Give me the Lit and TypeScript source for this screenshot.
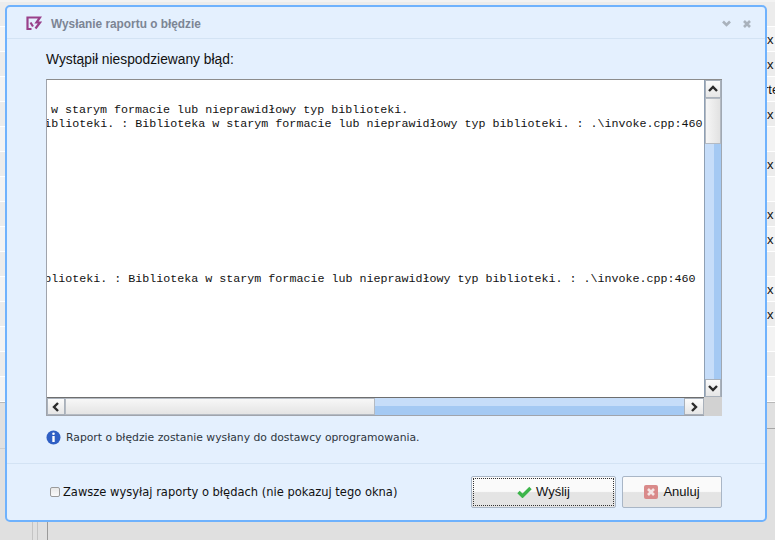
import { LitElement, html, css } from "lit";
import { customElement } from "lit/decorators.js";

const LINE_A = "Biblioteka w starym formacie lub nieprawidłowy typ biblioteki.";
const LINE_B = "Biblioteka w starym formacie lub nieprawidłowy typ biblioteki. : Biblioteka w starym formacie lub nieprawidłowy typ biblioteki. : .\\invoke.cpp:460";

const chevron = (d: string) => html`<svg width="12" height="10" viewBox="0 0 12 10"><path d=${d} fill="none" stroke="#2b2b2b" stroke-width="2.4"/></svg>`;

@customElement("app-root")
export class AppRoot extends LitElement {
  static styles = css`
    :host { display: block; width: 775px; height: 540px; position: relative; overflow: hidden; background: #e0e0e0; font-family: "DejaVu Sans", sans-serif; }
    .bg { display: flex; flex-direction: column; height: 540px; }
    .bg-rows { display: flex; flex-direction: column; padding-top: 2px; height: 402px; box-sizing: border-box; background: #f3f3f3; overflow: hidden; flex: none; }
    .bg-row { height: 25px; flex: none; box-sizing: border-box; border-bottom: 1px solid #fff; display: flex; align-items: center; padding-left: 767px; font: 13px "Liberation Sans", sans-serif; color: #111; white-space: nowrap; overflow: hidden; }
    .bg-row:nth-child(odd) { background: #ececec; }
    .rte { margin-left: -3px; }
    .bg-bands { flex: none; height: 52px; display: flex; border-top: 1px solid #b8b8b8; box-sizing: content-box; }
    .band-left { flex: 1; height: 45px; border-bottom: 1px solid #cdcdcd; }
    .band-right { flex: 1; height: 25px; border-bottom: 1px solid #a6a6a6; }
    .bg-low { flex: 1; display: flex; padding-left: 32px; }
    .bg-col { width: 4px; border-left: 1px solid #c4c4c4; border-right: 1px solid #c4c4c4; }
    .bg-col2 { width: 9px; border-right: 1px solid #9a9a9a; }

    .dialog { position: absolute; left: 5px; top: 5px; width: 762px; height: 517px; box-sizing: border-box; border: 2px solid #6fb2fd; border-radius: 5px; background: #e4f0fe; display: flex; flex-direction: column; }
    .head { height: 32px; flex: none; box-sizing: border-box; border-bottom: 1px solid #d3e3f4; display: flex; align-items: center; padding: 2px 14px 0 19px; gap: 9px; }
    .title { font: 700 11.85px "Liberation Sans", sans-serif; color: #7c8594; flex: 1; }
    .tools { display: flex; gap: 12px; align-items: center; }
    .body { flex: 1; padding: 11px 43px 0 39px; display: flex; flex-direction: column; }
    .lead { font: 13.8px "Liberation Sans", sans-serif; color: #111; line-height: 18px; height: 28px; padding-top: 1px; flex: none; }
    .frame { width: 676px; height: 337px; flex: none; box-sizing: border-box; border-top: 1px solid #8c8c8c; border-left: 1px solid #a0a4ac; background: #fff; display: grid; grid-template-columns: 657px 18px; grid-template-rows: 317px 19px; }
    .text { overflow: hidden; padding-top: 23px; box-sizing: border-box; font: 11.68px/14px "Liberation Mono", monospace; color: #111; white-space: pre; }
    .ln { height: 14px; }
    .l1 { margin-left: -73px; }
    .l2 { margin-left: -367px; }
    .l3 { margin-left: -374px; margin-top: 141px; }
    .vbar { display: flex; flex-direction: column; background: linear-gradient(90deg, #c6ddf9 0 55%, #a4c9f3 55%); border-left: 1px solid #8fa0b4; border-right: 1px solid #a0a8b2; box-sizing: border-box; }
    .vbar .btn { width: 16px; }
    .hbar { display: flex; background: linear-gradient(180deg, #c6ddf9 0 45%, #a4c9f3 45%); border-top: 1px solid #6e6e6e; border-bottom: 1px solid #a0a4ac; box-sizing: border-box; }
    .btn { flex: none; width: 18px; height: 18px; box-sizing: border-box; display: flex; align-items: center; justify-content: center; background: linear-gradient(#fbfbfb, #e6e6e6); border: 1px solid #a9b1bb; }
    .hbar .btn { height: 17px; }
    .hbar .btn.end { width: 20px; }
    .vthumb { height: 46px; flex: none; background: linear-gradient(90deg, #f6f6f6, #e2e2e2); border: 1px solid #b4bac2; box-sizing: border-box; }
    .hthumb { width: 310px; flex: none; background: linear-gradient(#f7f7f7, #e4e4e4); border: 1px solid #b4bac2; box-sizing: border-box; }
    .grow { flex: 1; }
    .corner { background: #d2d2d2; }
    .note { display: flex; align-items: center; gap: 5px; margin-top: 13px; font: 10.8px "DejaVu Sans", sans-serif; color: #2e3640; height: 16px; flex: none; }
    .foot { height: 57px; flex: none; box-sizing: border-box; border-top: 1px solid #d3e3f4; display: flex; align-items: center; padding: 0 43px 1px 43px; }
    .check { width: 10px; height: 10px; box-sizing: border-box; border: 1px solid #9a9a9a; border-radius: 2px; background: linear-gradient(#e8e8e8, #fafafa); margin-right: 3px; }
    .check-label { font: 11.49px "DejaVu Sans", sans-serif; color: #111; flex: 1; }
    .action { height: 32px; box-sizing: border-box; border: 1px solid #a9b6c6; border-radius: 2px; background: linear-gradient(#fafafa 0 48%, #e4e4e4 52%); display: flex; align-items: center; justify-content: center; font: 13px "Liberation Sans", sans-serif; color: #111; }
    .send { width: 145px; margin-right: 6px; gap: 4px; position: relative; }
    .send::after { content: ""; position: absolute; inset: 1px; border: 1px dotted #333; }
    .cancel { width: 100px; gap: 5px; }
  `;

  render() {
    const rows = ["", "x", "x", "rte", "x", "", "x", "", "x", "x", "", "x", "x", "", "", ""];
    return html`
      <div class="bg">
        <div class="bg-rows">
          ${rows.map(r => html`<div class="bg-row">${r === "rte" ? html`<span class="rte">rte</span>` : r}</div>`)}
        </div>
        <div class="bg-bands"><div class="band-left"></div><div class="band-right"></div></div>
        <div class="bg-low"><div class="bg-col"></div><div class="bg-col2"></div></div>
      </div>
      <div class="dialog">
        <div class="head">
          <svg width="16" height="15" viewBox="0 0 16 15"><path d="M5.5 13H1.5V1.5H14L10.5 6.5H14L9.5 12.5M4.5 6.5L7 10.5" fill="none" stroke="#99408a" stroke-width="2.2"/></svg>
          <span class="title">Wysłanie raportu o błędzie</span>
          <span class="tools">
            <svg width="9" height="8" viewBox="0 0 9 8"><path d="M1 1.5l3.5 3.5L8 1.5" fill="none" stroke="#a9b2bc" stroke-width="2.6"/></svg>
            <svg width="8" height="8" viewBox="0 0 8 8"><path d="M1 1l6 6M7 1L1 7" fill="none" stroke="#a9b2bc" stroke-width="2.6"/></svg>
          </span>
        </div>
        <div class="body">
          <div class="lead">Wystąpił niespodziewany błąd:</div>
          <div class="frame">
            <div class="text"><div class="ln l1">${LINE_A}</div><div class="ln l2">${LINE_B}</div><div class="ln l3">${LINE_B}</div></div>
            <div class="vbar">
              <div class="btn">${chevron("M2 7l4-4 4 4")}</div>
              <div class="vthumb"></div>
              <div class="grow"></div>
              <div class="btn">${chevron("M2 3l4 4 4-4")}</div>
            </div>
            <div class="hbar">
              <div class="btn">${chevron("M8 1L4 5l4 4")}</div>
              <div class="hthumb"></div>
              <div class="grow"></div>
              <div class="btn end">${chevron("M4 1l4 4-4 4")}</div>
            </div>
            <div class="corner"></div>
          </div>
          <div class="note">
            <svg width="15" height="15" viewBox="0 0 15 15"><circle cx="7.5" cy="7.5" r="7" fill="#2f5fc4"/><circle cx="7.5" cy="3.8" r="1.3" fill="#fff"/><rect x="6.3" y="6" width="2.4" height="6" fill="#fff"/></svg>
            <span>Raport o błędzie zostanie wysłany do dostawcy oprogramowania.</span>
          </div>
        </div>
        <div class="foot">
          <span class="check"></span>
          <span class="check-label">Zawsze wysyłaj raporty o błędach (nie pokazuj tego okna)</span>
          <div class="action send">
            <svg width="15" height="12" viewBox="0 0 15 12"><path d="M1.5 6l4 4L13.5 2" fill="none" stroke="#3cb54a" stroke-width="3.4"/></svg>
            <span>Wyślij</span>
          </div>
          <div class="action cancel">
            <svg width="14" height="14" viewBox="0 0 14 14"><rect width="14" height="14" rx="2" fill="#d98a8a"/><path d="M4 4l6 6M10 4l-6 6" stroke="#f4e6e6" stroke-width="2.6"/></svg>
            <span>Anuluj</span>
          </div>
        </div>
      </div>
    `;
  }
}
